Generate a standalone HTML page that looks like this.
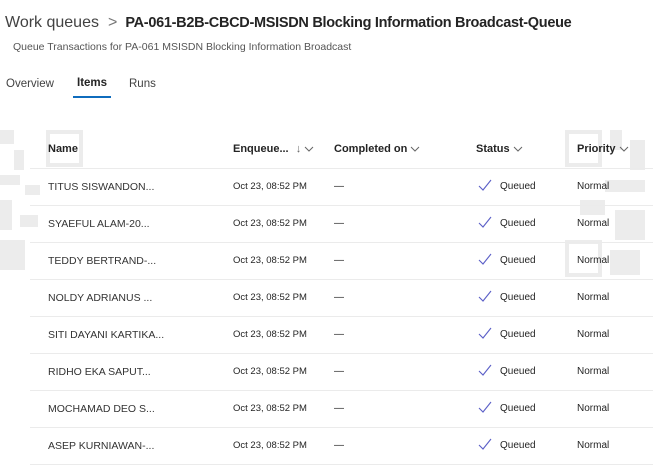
<!DOCTYPE html><html><head><style>
body{margin:0;width:653px;height:461px;background:#fff;font-family:"Liberation Sans",sans-serif;color:#242424;position:relative;overflow:hidden}
.a{position:absolute;white-space:nowrap}
.row{position:absolute;left:30px;right:0;height:37px;border-bottom:1px solid #ebebeb;font-size:10px}
.row span{position:absolute;top:13px;white-space:nowrap}
.qr{position:absolute;background:#ececec}
.ch{display:inline-block;vertical-align:middle;margin-left:3px}
</style></head><body>
<div class="qr" style="left:0;top:130px;width:14px;height:14px"></div>
<div class="qr" style="left:14px;top:150px;width:10px;height:20px"></div>
<div class="qr" style="left:0;top:175px;width:20px;height:10px"></div>
<div class="qr" style="left:25px;top:185px;width:15px;height:10px"></div>
<div class="qr" style="left:0;top:200px;width:12px;height:30px"></div>
<div class="qr" style="left:20px;top:215px;width:18px;height:12px"></div>
<div class="qr" style="left:0;top:240px;width:25px;height:30px"></div>
<div class="qr" style="left:46px;top:130px;width:37px;height:37px;background:none;border:4px solid #ececec;box-sizing:border-box"></div>
<div class="qr" style="left:565px;top:130px;width:37px;height:37px;background:none;border:4px solid #ececec;box-sizing:border-box"></div>
<div class="qr" style="left:610px;top:130px;width:12px;height:20px"></div>
<div class="qr" style="left:630px;top:140px;width:15px;height:30px"></div>
<div class="qr" style="left:605px;top:180px;width:40px;height:12px"></div>
<div class="qr" style="left:580px;top:200px;width:25px;height:15px"></div>
<div class="qr" style="left:615px;top:210px;width:30px;height:30px"></div>
<div class="qr" style="left:565px;top:240px;width:37px;height:37px;background:none;border:4px solid #ececec;box-sizing:border-box"></div>
<div class="qr" style="left:610px;top:250px;width:30px;height:25px"></div>
<div class="a" style="left:5px;top:14px;font-size:16px"><span style="color:#424242">Work queues</span><span style="color:#777;margin:0 8px 0 9px">&gt;</span><b style="font-size:14.5px;letter-spacing:-0.3px">PA-061-B2B-CBCD-MSISDN Blocking Information Broadcast-Queue</b></div>
<div class="a" style="left:13px;top:41px;font-size:10.5px;color:#555">Queue Transactions for PA-061 MSISDN Blocking Information Broadcast</div>
<div class="a" style="left:6px;top:78px;font-size:11.5px;color:#424242">Overview</div>
<div class="a" style="left:77px;top:77px;font-size:11.5px;font-weight:bold">Items</div>
<div class="a" style="left:73px;top:96px;width:38px;height:2px;background:#0f6cbd"></div>
<div class="a" style="left:129px;top:78px;font-size:11.5px;color:#424242">Runs</div>
<div class="row" style="top:131px;height:37px;font-size:11px;font-weight:bold">
<span style="left:18px;top:12px">Name</span>
<span style="left:203px;top:12px">Enqueue... <span style="font-weight:normal;color:#666;position:static;margin-left:4px">↓</span><svg class="ch" width="10" height="6" viewBox="0 0 10 6"><path d="M1 1l4 4 4-4" fill="none" stroke="#666"/></svg></span>
<span style="left:304px;top:12px">Completed on<svg class="ch" width="10" height="6" viewBox="0 0 10 6"><path d="M1 1l4 4 4-4" fill="none" stroke="#666"/></svg></span>
<span style="left:446px;top:12px">Status<svg class="ch" width="10" height="6" viewBox="0 0 10 6"><path d="M1 1l4 4 4-4" fill="none" stroke="#666"/></svg></span>
<span style="left:547px;top:12px">Priority<svg class="ch" width="10" height="6" viewBox="0 0 10 6"><path d="M1 1l4 4 4-4" fill="none" stroke="#666"/></svg></span></div>
<div id="rows"></div>
<script>
var n=["TITUS SISWANDON...","SYAEFUL ALAM-20...","TEDDY BERTRAND-...","NOLDY ADRIANUS ...","SITI DAYANI KARTIKA...","RIDHO EKA SAPUT...","MOCHAMAD DEO S...","ASEP KURNIAWAN-..."],h="";
n.forEach(function(x,i){h+='<div class="row" style="top:'+(168+i*37)+'px"><span style="left:18px;font-size:10.5px;color:#333">'+x+'</span><span style="left:203px;font-size:9.5px">Oct 23, 08:52 PM</span><span style="left:304px">—</span><span style="left:448px;top:11px"><svg width="14" height="12" viewBox="0 0 14 12"><path d="M1 7l4 4 8-10" fill="none" stroke="#5b5fc7" stroke-width="1.1"/></svg></span><span style="left:470px">Queued</span><span style="left:547px">Normal</span></div>'});
document.getElementById("rows").innerHTML=h;
</script>
</body></html>
